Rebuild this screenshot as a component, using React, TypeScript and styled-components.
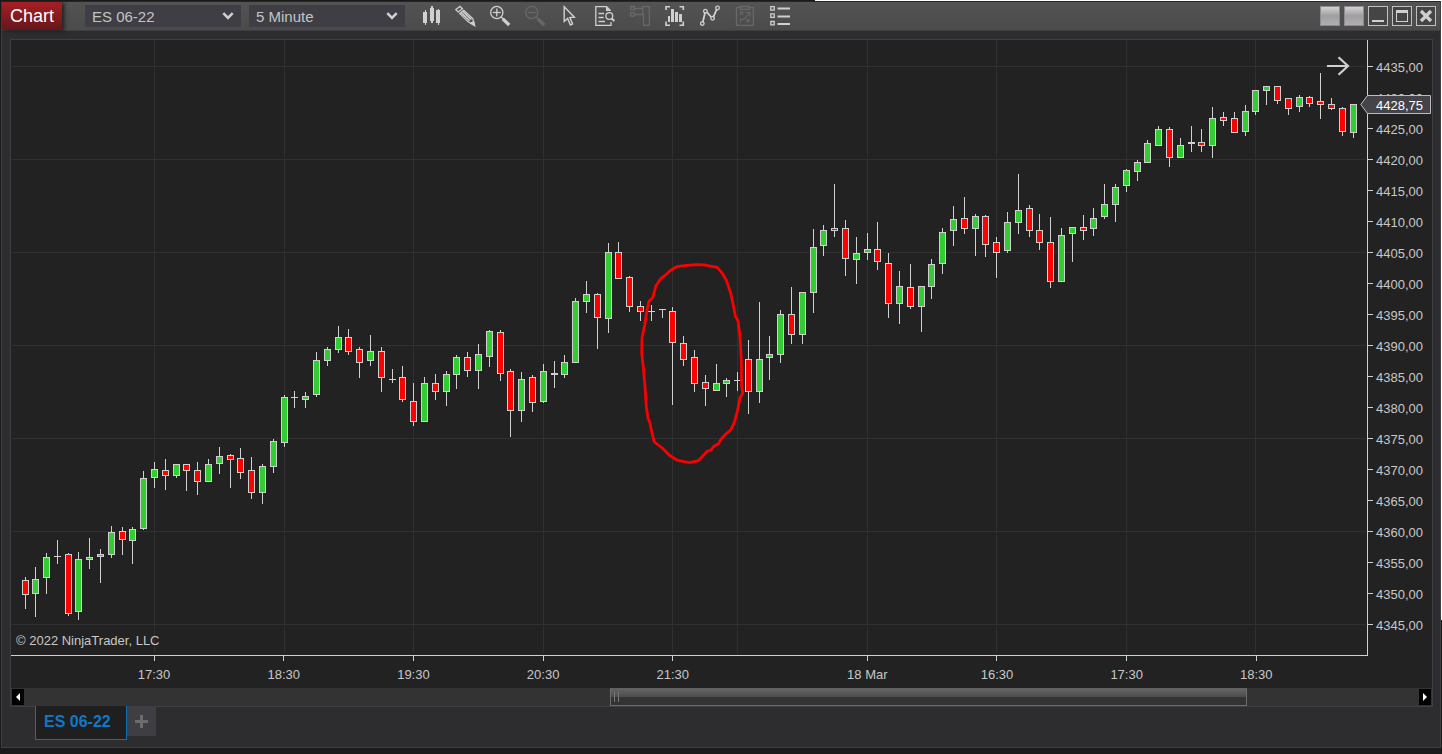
import React, { ReactNode } from "react";
import styled, { createGlobalStyle } from "styled-components";

const GlobalStyle = createGlobalStyle`
  * { box-sizing: border-box; }
  body {
    margin: 0;
    background: #1a1a1a;
    font-family: "Liberation Sans", Arial, sans-serif;
    color: #c8c8c8;
  }
  button, select { font-family: inherit; color: inherit; margin: 0; padding: 0; border: 0; background: none; }
`;

const LINE = "#3f3f43";
const INK = "#d0d0d0";

const Desktop = styled.div`
  display: flex;
  flex-direction: column;
  min-height: 100vh;
  padding: 1px 1px 6px;
  background:
    linear-gradient(90deg, #1a1a1a 815px, #ffffff 815px) top / 100% 1px no-repeat,
    linear-gradient(#ffffff 620px, #1a1a1a 620px) right / 1px 100% no-repeat,
    linear-gradient(#1a1a1a, #1a1a1a);
`;

const Window = styled.main`
  flex: 1;
  display: flex;
  flex-direction: column;
  border: 1px solid ${LINE};
  border-top-color: #262626;
  background: #2d2d30;
`;

const TitleBar = styled.header`
  display: flex;
  align-items: center;
  height: 29px;
  border-bottom: 1px solid ${LINE};
  background: linear-gradient(#535353, #4b4b4b);
`;

const Badge = styled.h1`
  margin: 0 23px 0 0;
  width: 60px;
  height: 28px;
  line-height: 28px;
  font-size: 18px;
  font-weight: 400;
  text-align: center;
  color: #ffffff;
  background: linear-gradient(#a52024, #65161a);
  box-shadow: 2px 1px 4px #1c1c1c;
`;

const Combo = styled.label`
  display: grid;
  width: 156px;
  height: 22px;
  margin-right: 8px;
  align-items: center;
  background: #3f3e45;
  > * { grid-area: 1 / 1; }
  svg { justify-self: end; margin-right: 7px; pointer-events: none; }
`;

const ComboSelect = styled.select`
  width: 100%;
  height: 22px;
  padding-left: 7px;
  appearance: none;
  font-size: 15px;
  color: #c4c4c4;
`;

const Tools = styled.nav`
  display: flex;
  flex: 1;
`;

const Tool = styled.button<{ $dim?: boolean }>`
  display: flex;
  align-items: center;
  justify-content: center;
  width: 35px;
  height: 28px;
  color: ${(p) => (p.$dim ? "#686868" : INK)};
`;

const WindowButtons = styled.div`
  display: flex;
  gap: 4px;
  margin: 0 4px;
`;

const WindowButton = styled.button<{ $solid?: boolean }>`
  display: flex;
  align-items: center;
  justify-content: center;
  width: 20px;
  height: 20px;
  border: 1px solid ${(p) => (p.$solid ? "#8d8b8d" : "#c0c0c0")};
  background: ${(p) => (p.$solid ? "linear-gradient(#d2d0d2, #a09ea0 50%, #b0aeb0)" : "#454545")};
`;

const Panel = styled.section`
  flex: 1;
  display: flex;
  flex-direction: column;
  margin: 8px 7px 0 8px;
  border: 1px solid ${LINE};
  background: #222222;
`;

const ChartGrid = styled.div`
  flex: 1;
  display: grid;
  grid-template-columns: minmax(0, 1fr) 65px;
  grid-template-rows: minmax(0, 1fr) 32px;
`;

const Plot = styled.div`
  position: relative;
  min-height: 400px;
  border-bottom: 1px solid ${INK};
  contain: size;
  > svg:first-child { display: block; width: 100%; height: 100%; }
`;

const Copyright = styled.small`
  position: absolute;
  left: 5px;
  bottom: 6px;
  font-size: 13px;
  line-height: 16px;
`;

const JumpButton = styled.button`
  position: absolute;
  top: 16px;
  right: 16px;
  height: 20px;
`;

const PriceAxis = styled.div`
  position: relative;
  display: flex;
  flex-direction: column;
  padding: 11px 0 16px;
  border-left: 1px solid ${INK};
`;

const PriceLabel = styled.div`
  flex: 1;
  display: flex;
  align-items: center;
  font-size: 13px;
  line-height: 16px;
  span { padding-top: 2px; }
  &::before {
    content: "";
    width: 5px;
    height: 1px;
    margin-right: 3px;
    background: ${INK};
  }
`;

const PriceMarker = styled.output`
  position: absolute;
  top: 55px;
  right: 1px;
  width: 71px;
  height: 20px;
  padding-left: 16px;
  font-size: 13px;
  line-height: 21px;
  color: #ffffff;
  svg { position: absolute; inset: 0; }
  span { position: relative; }
`;

const TimeAxis = styled.div`
  display: grid;
  grid-template-columns: 782fr repeat(5, 1296fr) 648fr repeat(4, 1296fr) 458fr;
`;

const TimeLabel = styled.div<{ $column: number }>`
  grid-column: ${(p) => p.$column};
  grid-row: 1;
  display: flex;
  flex-direction: column;
  align-items: center;
  gap: 6px;
  font-size: 13px;
  line-height: 16px;
  &::before {
    content: "";
    width: 1px;
    height: 5px;
    background: ${INK};
  }
`;

const ScrollBar = styled.div`
  display: flex;
  align-items: center;
  height: 18px;
  padding: 0 1px;
  background: #333333;
`;

const ScrollArrow = styled.button`
  display: flex;
  align-items: center;
  justify-content: center;
  width: 12px;
  height: 16px;
  background: #000000;
`;

const Track = styled.div`
  flex: 1;
  display: grid;
  grid-template-columns: 586fr 637fr 172fr;
  height: 18px;
`;

const Thumb = styled.div`
  grid-column: 2;
  display: flex;
  align-items: center;
  gap: 3px;
  padding-left: 3px;
  border: 1px solid #6c6c6c;
  border-top-color: #606060;
  background: linear-gradient(#646464, #4c4c4c 50%, #333333 50%);
  i { width: 1px; height: 10px; background: #777777; }
`;

const Tabs = styled.div`
  display: flex;
  align-items: flex-start;
  height: 41px;
  margin-top: -1px;
  padding-left: 33px;
`;

const Tab = styled.button`
  width: 92px;
  height: 34px;
  padding: 0 7px 2px 8px;
  border: 1px solid #0c6fb8;
  border-top: 0;
  background: #1f1f1f;
  color: #0f78c8;
  font-size: 16px;
  font-weight: 700;
  text-align: left;
  white-space: nowrap;
`;

const AddTab = styled.button`
  display: flex;
  align-items: center;
  justify-content: center;
  width: 29px;
  height: 30px;
  background: #3f3e45;
`;

type Kind = "G" | "R" | "D";
type Candle = [Kind, number, number, number, number];

/* kind, high, body top, body bottom, low */
const candles: Candle[] = [
  ["R", 577, 580, 595, 609], ["G", 567, 579, 594, 617], ["G", 553, 557, 578, 594], ["D", 540, 556, 557, 564],
  ["R", 553, 554, 614, 616], ["G", 552, 559, 612, 620], ["G", 538, 557, 560, 569], ["G", 549, 554, 557, 583],
  ["G", 526, 532, 555, 558], ["R", 527, 531, 540, 555], ["G", 527, 529, 541, 564], ["G", 471, 478, 529, 530],
  ["G", 462, 469, 478, 488], ["R", 459, 470, 476, 490], ["G", 464, 464, 476, 478], ["R", 464, 464, 471, 491],
  ["R", 462, 470, 482, 495], ["G", 459, 464, 482, 482], ["G", 447, 456, 464, 474], ["R", 454, 455, 460, 488],
  ["R", 448, 458, 473, 479], ["R", 457, 470, 493, 499], ["G", 464, 466, 493, 504], ["G", 439, 441, 467, 473],
  ["G", 395, 397, 443, 447], ["D", 391, 397, 398, 408], ["G", 392, 396, 400, 408], ["G", 352, 360, 395, 397],
  ["G", 347, 349, 361, 366], ["G", 326, 337, 350, 353], ["R", 329, 337, 352, 355], ["R", 347, 349, 363, 378],
  ["G", 335, 351, 361, 366], ["R", 347, 351, 378, 392], ["D", 369, 379, 380, 383], ["R", 366, 377, 400, 402],
  ["R", 383, 401, 422, 426], ["G", 377, 383, 422, 422], ["R", 374, 383, 392, 400], ["G", 371, 374, 392, 406],
  ["G", 355, 357, 375, 389], ["R", 352, 357, 371, 377], ["G", 344, 354, 371, 389], ["G", 330, 331, 357, 367],
  ["R", 330, 332, 374, 381], ["R", 369, 371, 411, 437], ["G", 372, 379, 411, 422], ["R", 375, 377, 403, 412],
  ["G", 364, 371, 402, 403], ["D", 361, 373, 375, 388], ["G", 355, 362, 375, 378], ["G", 298, 301, 363, 363],
  ["G", 281, 294, 302, 313], ["R", 293, 294, 318, 349], ["G", 243, 252, 319, 333], ["R", 242, 252, 279, 279],
  ["R", 276, 277, 307, 312], ["R", 301, 306, 312, 321], ["D", 305, 311, 312, 321], ["D", 309, 309, 310, 318],
  ["R", 307, 311, 343, 405], ["R", 336, 343, 360, 366], ["R", 350, 357, 384, 392], ["R", 375, 382, 389, 406],
  ["G", 364, 383, 391, 391], ["G", 378, 380, 384, 397], ["D", 372, 380, 381, 391], ["R", 340, 359, 392, 414],
  ["G", 302, 359, 392, 403], ["G", 336, 354, 358, 380], ["G", 310, 314, 355, 363], ["R", 287, 314, 335, 344],
  ["G", 292, 292, 335, 344], ["G", 229, 247, 293, 313], ["G", 225, 230, 246, 256], ["R", 184, 228, 231, 237],
  ["R", 220, 228, 259, 276], ["G", 237, 253, 260, 284], ["G", 233, 249, 253, 260], ["R", 222, 249, 262, 270],
  ["R", 253, 263, 304, 318], ["G", 271, 286, 304, 324], ["R", 264, 287, 307, 309], ["G", 286, 286, 307, 332],
  ["G", 259, 264, 287, 299], ["G", 228, 232, 264, 274], ["G", 206, 219, 231, 246], ["R", 197, 218, 229, 234],
  ["G", 214, 216, 229, 256], ["R", 215, 216, 245, 257], ["R", 237, 242, 253, 278], ["G", 212, 222, 251, 253],
  ["G", 174, 210, 223, 234], ["R", 205, 208, 231, 237], ["R", 214, 230, 243, 250], ["R", 217, 242, 282, 288],
  ["G", 228, 235, 282, 282], ["G", 227, 227, 234, 262], ["R", 215, 227, 231, 240], ["G", 208, 218, 229, 236],
  ["G", 184, 204, 217, 219], ["G", 184, 187, 205, 222], ["G", 169, 170, 186, 192], ["G", 160, 162, 172, 181],
  ["G", 140, 143, 163, 163], ["G", 126, 129, 146, 146], ["R", 127, 129, 158, 167], ["G", 138, 145, 158, 158],
  ["D", 126, 142, 144, 152], ["R", 129, 142, 146, 152], ["G", 107, 118, 146, 158], ["R", 112, 117, 121, 126],
  ["R", 112, 118, 133, 133], ["G", 105, 111, 132, 136], ["G", 90, 90, 112, 115], ["G", 86, 86, 91, 105],
  ["R", 86, 86, 101, 104], ["R", 98, 98, 109, 115], ["G", 95, 97, 107, 112], ["R", 96, 97, 104, 107],
  ["R", 73, 101, 105, 119], ["R", 98, 104, 109, 110], ["R", 107, 108, 132, 136], ["G", 104, 104, 133, 138],
];

const candleX = (i: number) => Math.floor(25 + 10.797 * i);
const fills: Record<Kind, string> = { G: "#32cd32", R: "#ff0000", D: INK };

const gridColumns = [12, 24, 36, 48, 60, 66, 78, 90, 102, 114].map(candleX);
const gridRows = [66, 159, 252, 345, 438, 531, 624];

const prices = Array.from({ length: 19 }, (_, i) => `${4435 - i * 5},00`);
const times: [string, number][] = [
  ["17:30", 2], ["18:30", 3], ["19:30", 4], ["20:30", 5], ["21:30", 6],
  ["18 Mar", 8], ["16:30", 9], ["17:30", 10], ["18:30", 11],
];

const annotation =
  "M649 301L652.7 297.7L656 285.7L660.7 278.7L666.7 274L670 270.7L676.7 266.7L686.7 265.3L696.7 264.7L705 265L711.7 266.3L717.3 267.3L722.3 273.3L726.7 281L730.7 293.3L733.3 305L735.3 316L738 320.7L740 336.7L741.3 360L741.7 386.7L742.7 393.3L740 397.7L737.3 411.7L734.3 422.7L730.7 430L725.7 434L721 439.3L718.3 444L714.3 446L711 450L707.3 451.3L701.7 457.3L698.3 460.7L689.3 462.7L677.3 460.3L669.3 455.3L662.3 448L654.3 442L651.7 431.7L650 423.3L648 418L646.3 406.7L645 386.7L643.3 366.7L641.7 353.3L642 338.3L644.7 325L647 310Z";

const CandleChart = () => (
  <svg viewBox="11 40 1356 615" preserveAspectRatio="none" role="img" aria-label="ES 06-22 five minute candles">
    <g shapeRendering="crispEdges">
      {gridColumns.map((x) => <rect key={x} x={x} y={40} width={1} height={613} fill="#303032" />)}
      {gridRows.map((y) => <rect key={y} x={12} y={y} width={1354} height={1} fill="#303032" />)}
      {candles.map(([kind, high, top, bottom, low], i) => {
        const x = candleX(i);
        return (
          <g key={i}>
            <rect x={x} y={high} width={1} height={low - high} fill={INK} />
            <rect x={x - 3} y={top} width={7} height={bottom - top} fill={INK} />
            {kind !== "D" && <rect x={x - 2} y={top + 1} width={5} height={bottom - top - 2} fill={fills[kind]} />}
          </g>
        );
      })}
    </g>
    <path d={annotation} fill="none" stroke="#fa0000" strokeWidth={2.8} strokeLinejoin="round" />
  </svg>
);

const Chevron = () => (
  <svg width="12" height="8" viewBox="0 0 12 8">
    <path d="M1.3 1.2L6 6L10.7 1.2" fill="none" stroke="#d0d0d0" strokeWidth="2.6" />
  </svg>
);

const lens = (
  <>
    <circle cx="6.8" cy="7.5" r="6.1" />
    <path d="M2.8 7.5H10.8" />
    <path d="M11.2 12L13.5 14.3" />
    <path d="M12.8 13.8L19.2 20" strokeWidth="3.2" />
  </>
);

const tools: { name: string; dim?: boolean; art: ReactNode }[] = [
  {
    name: "Chart style",
    art: (
      <g fill="currentColor" stroke="none">
        <path d="M3 7h4v11H3zM5 5h1v15H5zM10 3h4v13h-4zM11 1h2v17h-2zM16 5h4v13h-4zM18 4h1v16h-1z" />
      </g>
    ),
  },
  {
    name: "Drawing tools",
    art: (
      <>
        <path d="M0.8 4.6L5 1.4L7.4 3.8L3.2 7Z" />
        <path d="M4.6 8.4L8.8 5.2L17.8 13.6L19.4 20.2L12.8 16.6Z" strokeWidth="1.2" />
        <path d="M6 7.6L14.6 15.8M7.8 6.4L16.4 14.4" strokeWidth="1.5" />
        <path d="M15.8 18.2L18.6 16.6L19.6 20.6Z" fill="currentColor" />
      </>
    ),
  },
  { name: "Zoom in", art: <>{lens}<path d="M6.8 3.5V11.5" /></> },
  { name: "Zoom out", dim: true, art: lens },
  { name: "Cursor", art: <path d="M4.2 1.8V16.4L7.6 13.4L10.4 20L12.6 19L9.8 12.6L14.4 12.2Z" strokeWidth="1.4" /> },
  {
    name: "Data box",
    art: (
      <>
        <path d="M16 17V20.3H0.8V1.6H11.6L15.6 5.6" />
        <path d="M11 1.4V6H16Z" fill="currentColor" stroke="none" />
        <path d="M3.5 8.5H9M3.5 12.5H8.6M3.5 16.5H10" />
        <circle cx="14.3" cy="11" r="3.4" />
        <path d="M16.6 13.4L19.4 16" strokeWidth="2" />
      </>
    ),
  },
  {
    name: "Chart trader",
    dim: true,
    art: <path d="M0.7 1.5H4.3V4.9H0.7ZM0.7 7.7H4.3V11.1H0.7ZM4.3 3.5H12.7M4.3 9.5H13.5V20.3H19.3V1.7H12.7V9.5" />,
  },
  {
    name: "Data series",
    art: (
      <>
        <path d="M1 5V1.7H5M14.5 1.7H18.3V5M18.3 16.5V20.3H14.5M5 20.3H1V16.5" strokeWidth="1.6" />
        <path d="M3 11h2v6H3zM6 4h3v13H6zM10 7h3v10h-3zM14 9h3v8h-3z" fill="currentColor" stroke="none" />
      </>
    ),
  },
  {
    name: "Indicators",
    art: (
      <>
        <path d="M2.8 17L5 8M6.8 7.2L11.2 12M13.4 11.8L16.6 4.6" strokeWidth="1.8" />
        <circle cx="2.3" cy="18.6" r="1.8" />
        <circle cx="5.4" cy="6.2" r="1.8" />
        <circle cx="12.6" cy="13.3" r="1.8" />
        <circle cx="17.5" cy="3" r="1.8" />
      </>
    ),
  },
  {
    name: "Strategies",
    dim: true,
    art: (
      <>
        <path d="M5.5 2.7H1.5V20.3H18.3V2.7H14.3" />
        <path d="M5.5 1.5H14.3V4.3H5.5Z" />
        <path d="M5 6.5L8.2 9.7M8.2 6.5L5 9.7M11.5 14L14.7 17.2M14.7 14L11.5 17.2M5.5 17.5V14.5H8.5L14.5 8M11 7.5H15V11.5" strokeWidth="1.1" />
      </>
    ),
  },
  {
    name: "Properties",
    art: (
      <>
        <path d="M0.8 1.7H4.2V5.1H0.8ZM0.8 8.9H4.2V12.3H0.8ZM0.8 16.5H4.2V19.9H0.8Z" />
        <path d="M7.5 3.5H20M7.5 11.5H20M7.5 19H20" strokeWidth="1.8" />
      </>
    ),
  },
];

export default function App() {
  return (
    <>
      <GlobalStyle />
      <Desktop>
        <Window>
          <TitleBar>
            <Badge>Chart</Badge>
            <Combo>
              <ComboSelect aria-label="Instrument" defaultValue="ES 06-22">
                <option>ES 06-22</option>
              </ComboSelect>
              <Chevron />
            </Combo>
            <Combo>
              <ComboSelect aria-label="Interval" defaultValue="5 Minute">
                <option>5 Minute</option>
              </ComboSelect>
              <Chevron />
            </Combo>
            <Tools>
              {tools.map((t) => (
                <Tool key={t.name} aria-label={t.name} $dim={t.dim}>
                  <svg width="21" height="22" viewBox="0 0 21 22" fill="none" stroke="currentColor" strokeWidth="1.3">
                    {t.art}
                  </svg>
                </Tool>
              ))}
            </Tools>
            <WindowButtons>
              <WindowButton $solid aria-label="Link instrument" />
              <WindowButton $solid aria-label="Link interval" />
              <WindowButton aria-label="Minimize">
                <svg width="18" height="18" viewBox="0 0 18 18"><path d="M3 13h12v2H3z" fill="#d0d0d0" /></svg>
              </WindowButton>
              <WindowButton aria-label="Maximize">
                <svg width="18" height="18" viewBox="0 0 18 18">
                  <path d="M3 3h12v12H3zM4 6v8h10V6z" fill="#d0d0d0" fillRule="evenodd" />
                </svg>
              </WindowButton>
              <WindowButton aria-label="Close">
                <svg width="18" height="18" viewBox="0 0 18 18">
                  <path d="M4 4L14 14M14 4L4 14" stroke="#d0d0d0" strokeWidth="3.2" />
                </svg>
              </WindowButton>
            </WindowButtons>
          </TitleBar>

          <Panel>
            <ChartGrid>
              <Plot>
                <CandleChart />
                <JumpButton aria-label="Go to latest bar">
                  <svg width="25" height="20" viewBox="0 0 25 20">
                    <path d="M1 10H22M12.5 1.2L22 10L12.5 18.8" fill="none" stroke="#d0d0d0" strokeWidth="2.2" />
                  </svg>
                </JumpButton>
                <Copyright>© 2022 NinjaTrader, LLC</Copyright>
              </Plot>
              <PriceAxis>
                {prices.map((p) => <PriceLabel key={p}><span>{p}</span></PriceLabel>)}
                <PriceMarker>
                  <svg width="71" height="20" viewBox="0 0 71 20">
                    <path d="M7.5 0.5H70.5V18.5H7.5L0.8 9.5Z" fill="#444349" stroke="#bcbcbc" />
                  </svg>
                  <span>4428,75</span>
                </PriceMarker>
              </PriceAxis>
              <TimeAxis>
                {times.map(([label, column]) => <TimeLabel key={column} $column={column}>{label}</TimeLabel>)}
              </TimeAxis>
            </ChartGrid>
            <ScrollBar>
              <ScrollArrow aria-label="Scroll left">
                <svg width="4" height="8" viewBox="0 0 4 8"><path d="M4 0V8L0 4Z" fill="#ffffff" /></svg>
              </ScrollArrow>
              <Track>
                <Thumb><i /><i /></Thumb>
              </Track>
              <ScrollArrow aria-label="Scroll right">
                <svg width="4" height="8" viewBox="0 0 4 8"><path d="M0 0V8L4 4Z" fill="#ffffff" /></svg>
              </ScrollArrow>
            </ScrollBar>
          </Panel>

          <Tabs>
            <Tab>ES 06-22</Tab>
            <AddTab aria-label="Add tab">
              <svg width="13" height="13" viewBox="0 0 13 13"><path d="M5 0h3v5h5v3H8v5H5V8H0V5h5z" fill="#6c6c6c" /></svg>
            </AddTab>
          </Tabs>
        </Window>
      </Desktop>
    </>
  );
}
